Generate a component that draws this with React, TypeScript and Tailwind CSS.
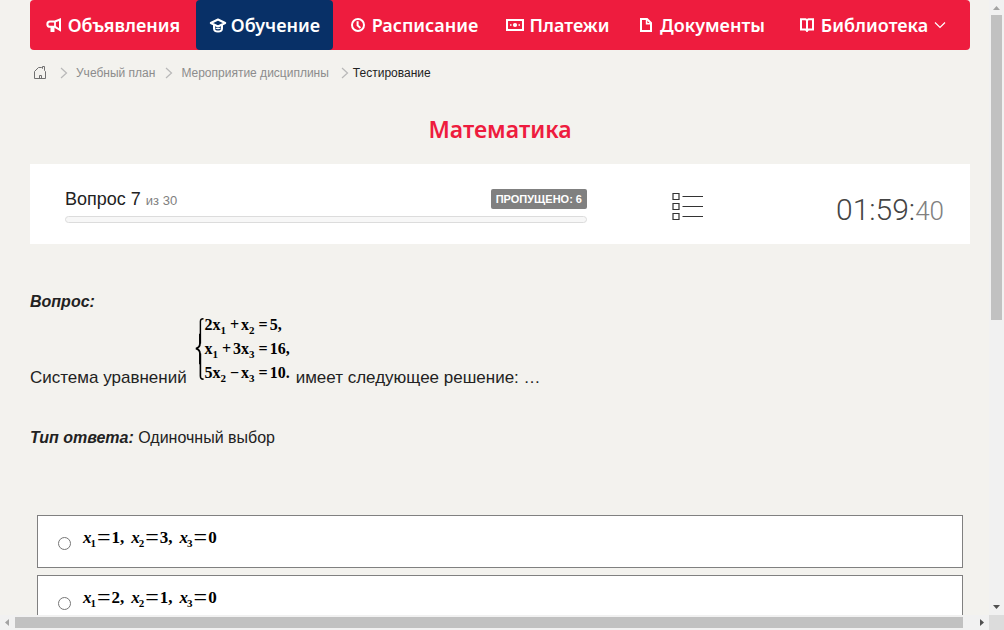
import React, { Fragment } from "react";
import type { ReactNode } from "react";

function Icon({ children, wide = false }: { children: ReactNode; wide?: boolean }) {
  return (
    <svg
      viewBox={wide ? "0 0 18 16" : "0 0 16 16"}
      className={wide ? "h-4 w-[18px] shrink-0" : "h-4 w-4 shrink-0"}
      fill="none"
      stroke="currentColor"
      strokeWidth="2"
      aria-hidden="true"
    >
      {children}
    </svg>
  );
}

const MegaphoneIcon = () => (
  <Icon>
    <path d="M14 2.500V13L9 9.800H4A2.200 2.200 0 0 1 4 4.500H9Z" strokeWidth="2" />
    <path d="M9 4.500v5" strokeWidth="1.8" />
    <path d="M4.500 9.600V15H8.500V9.600Z" fill="currentColor" stroke="none" />
  </Icon>
);

const CapIcon = () => (
  <Icon wide>
    <path d="M1.800 6 9 2.500l7.200 3.500L9 9.500Z" strokeWidth="2" strokeLinejoin="round" />
    <path d="M5 8v3.400Q5 14.500 9 14.500T13 11.400V8" strokeWidth="2" />
    <path d="M6.500 11Q9 12.300 11.500 11" strokeWidth="1.200" />
  </Icon>
);

const ClockIcon = () => (
  <Icon>
    <circle cx="8" cy="8" r="6" />
    <path d="M7.6 4.2V8.4L10.4 11" />
  </Icon>
);

const MoneyIcon = () => (
  <Icon wide>
    <path d="M1 3H17V13H1Z" />
    <path d="M1 2H5L1 5ZM13 2H17V5ZM1 14V11L5 14ZM17 14H13L17 11Z" fill="currentColor" stroke="none" />
    <circle cx="9" cy="8" r="2.1" fill="currentColor" stroke="none" />
    <path d="M4 8h1.5M12.5 8H14" strokeWidth="1.5" />
  </Icon>
);

const FileIcon = () => (
  <Icon>
    <path d="M3 2H9L13 6V14H3Z" />
    <path d="M8.6 2V6.8H13" strokeWidth="1.6" />
  </Icon>
);

const BookIcon = () => (
  <Icon>
    <path d="M2 2.2H6.4L8 3.2 9.6 2.2H14V12.4H9.6L8 13.6 6.4 12.4H2Z" strokeWidth="2" />
    <path d="M8 3V14.8" strokeWidth="2" />
  </Icon>
);

const navItems = [
  { label: "Объявления", icon: <MegaphoneIcon /> },
  { label: "Обучение", icon: <CapIcon />, active: true },
  { label: "Расписание", icon: <ClockIcon /> },
  { label: "Платежи", icon: <MoneyIcon /> },
  { label: "Документы", icon: <FileIcon /> },
  { label: "Библиотека", icon: <BookIcon />, menu: true },
];

function MainNav() {
  return (
    <nav className="grid h-[50px] grid-cols-[166fr_137fr_162fr_125fr_163fr_187fr] rounded-[4px] bg-[#ee1c3e] font-['Noto_Sans','Open_Sans',sans-serif] text-[18px] font-semibold text-white">
      {navItems.map((item) => (
        <a
          key={item.label}
          href="#"
          className={
            item.active
              ? "flex items-center justify-center gap-1 rounded-[4px] bg-[#083067]"
              : item.menu
                ? "flex items-center justify-center gap-1.5 pr-2"
                : "flex items-center justify-center gap-1.5"
          }
        >
          {item.icon}
          <span>{item.label}</span>
          {item.menu && (
            <svg viewBox="0 0 12 8" className="h-2 w-3 shrink-0" fill="none" stroke="currentColor" strokeWidth="1.2" aria-hidden="true">
              <path d="M1 1.5 6 6.5 11 1.5" />
            </svg>
          )}
        </a>
      ))}
    </nav>
  );
}

function Separator() {
  return (
    <svg viewBox="0 0 8 12" className="h-3 w-2 shrink-0" fill="none" stroke="#b8b8b8" strokeWidth="1.2" aria-hidden="true">
      <path d="M1 1 6.5 6 1 11" />
    </svg>
  );
}

function Breadcrumbs() {
  return (
    <nav className="flex h-[46px] items-center pl-[3px] text-[12px] text-[#8c8c8c]">
      <a href="#" aria-label="Главная" className="mr-[13px]">
        <svg viewBox="0 0 14 14" className="h-3.5 w-3.5" fill="none" stroke="#707070" strokeWidth="1">
          <path d="M1.5 5.500V12.5H12.5V5.500M6.500 12.500V9.500H8.500V12.500" />
          <path d="M1.500 5.500 5.500 1.500H8.500L9.500 2.500V.500H11.500V4.500L12.500 5.500" />
        </svg>
      </a>
      <Separator />
      <a href="#" className="ml-2 mr-2.5">Учебный план</a>
      <Separator />
      <a href="#" className="mx-2 pr-1">Мероприятие дисциплины</a>
      <Separator />
      <span className="ml-1 text-[#222]">Тестирование</span>
    </nav>
  );
}

function StatusCard() {
  return (
    <section className="flex h-20 bg-white">
      <div className="ml-[35px] mt-6 min-w-0 flex-[522]">
        <div className="flex items-start justify-between">
          <p className="text-[18px] leading-[22px] text-[#222]">
            Вопрос 7 <span className="text-[13px] leading-none text-[#808080]">из 30</span>
          </p>
          <span className="mt-px h-5 rounded-[2px] bg-[#808080] px-[5px] text-[11px] font-bold leading-5 text-white">
            ПРОПУЩЕНО: 6
          </span>
        </div>
        <div className="mt-1.5 h-[7px] rounded-[4px] border border-[#dcdcdc] bg-[#f7f7f7]" />
      </div>
      <div className="flex flex-[201] items-start justify-center pt-7">
        <button type="button" aria-label="Список вопросов">
          <svg viewBox="0 0 32 30" className="h-[30px] w-8" fill="none" stroke="#333" strokeWidth="1.2">
            <path d="M1 1.500H7V7.500H1ZM1 11.500H7V17.500H1ZM1 21.500H7V27.500H1Z" />
            <path d="M10.500 4.500H31M10.500 14.500H31M10.500 24.500H31" />
          </svg>
        </button>
      </div>
      <p className="mr-[26px] flex flex-[156] items-baseline justify-end pt-[26px] font-['Roboto',sans-serif] text-[30px] font-light leading-10 text-[#444]">
        01:59:<span className="text-[26px] text-[#808080]">40</span>
      </p>
    </section>
  );
}

function Var({ n }: { n: number }) {
  return (
    <>
      x<sub className="bottom-[-4px] text-[11px] leading-none">{n}</sub>
    </>
  );
}

function Op({ children }: { children: string }) {
  return <span className="ml-1 mr-0.5">{children}</span>;
}

function EquationSystem() {
  return (
    <span className="ml-1 mr-1.5 inline-flex h-[70px] items-stretch align-[-1px] font-['Liberation_Serif',serif] text-[16px] font-bold text-black">
      <svg viewBox="0 0 10 70" className="h-[70px] w-[9px] shrink-0" fill="none" stroke="currentColor" aria-hidden="true">
        <path d="M9.5 1.5Q6 1.2 6 4.5V29" strokeWidth="1.6" />
        <path d="M5.5 18V29Q5.5 33.5 1 34.5 5.5 35.500 5.500 40V52" strokeWidth="2" />
        <path d="M6 40V65Q6 68.800 9.500 68.500" strokeWidth="1.8" />
      </svg>
      <span className="grid grid-rows-[24px_24px_24px] whitespace-nowrap leading-[22px]">
        <span>2<Var n={1} /><Op>+</Op><Var n={2} /><Op>=</Op>5,</span>
        <span><Var n={1} /><Op>+</Op>3<Var n={3} /><Op>=</Op>16,</span>
        <span>5<Var n={2} /><Op>−</Op><Var n={3} /><Op>=</Op>10.</span>
      </span>
    </span>
  );
}

const answers = [
  [1, 3, 0],
  [2, 1, 0],
];

function Answer({ values, index }: { values: number[]; index: number }) {
  return (
    <label className="flex h-[53px] items-start border border-[#808080] bg-white pl-5 font-['Liberation_Serif',serif] text-[17px] font-bold leading-5 text-black">
      <input
        type="radio"
        name="answer"
        value={index}
        className="mt-[21px] h-[13px] w-[13px] shrink-0 appearance-none rounded-full border border-[#767676] bg-white checked:border-4"
      />
      <span className="ml-3 mt-[11px] flex items-baseline">
        {values.map((v, i) => (
          <Fragment key={i}>
            <span className={i > 0 ? "ml-[7px] italic" : "italic"}>x</span>
            <span className="relative top-1 -ml-px text-[11px] leading-none">{i + 1}</span>
            <span className="relative top-0.5 mx-px text-[24px] font-normal leading-4">=</span>
            <span>{v}{i < values.length - 1 && ","}</span>
          </Fragment>
        ))}
      </span>
    </label>
  );
}

function Arrow({ d }: { d: string }) {
  return (
    <svg viewBox="0 0 15 15" className="h-[15px] w-[15px] shrink-0" aria-hidden="true">
      <path d={d} fill="currentColor" />
    </svg>
  );
}

export default function App() {
  return (
    <div className="grid h-screen grid-cols-[minmax(0,1fr)_15px] grid-rows-[minmax(0,1fr)_15px] bg-[#f3f2ee] font-['Liberation_Sans',Arial,sans-serif] text-[#222]">
      <main className="overflow-hidden pl-[30px] pr-[19px]">
        <MainNav />
        <Breadcrumbs />
        <h1 className="mt-[15px] text-center font-['Noto_Sans','Open_Sans',sans-serif] text-[23px] font-semibold leading-9 text-[#ee1c3e]">
          Математика
        </h1>
        <div className="mt-[17px]">
          <StatusCard />
        </div>
        <section className="mt-12 text-[16px] leading-5">
          <h2 className="font-bold italic">Вопрос:</h2>
          <p className="mt-0.5 text-[17px]">
            Система уравнений <EquationSystem />имеет следующее решение: …
          </p>
          <p className="mt-10">
            <b className="italic">Тип ответа:</b> Одиночный выбор
          </p>
        </section>
        <div className="mt-[67px] flex flex-col gap-[7px] px-[7px]">
          {answers.map((values, i) => (
            <Answer key={i} values={values} index={i} />
          ))}
        </div>
      </main>
      <div className="flex flex-col items-center bg-[#f1f1f1]">
        <span className="text-[#a3a3a3]"><Arrow d="M4 10H11L7.500 6Z" /></span>
        <div className="w-[11px] flex-[305] bg-[#c1c1c1]" />
        <div className="flex-[280]" />
        <span className="text-[#505050]"><Arrow d="M4 5H11L7.500 9Z" /></span>
      </div>
      <div className="flex items-center bg-[#f1f1f1]">
        <span className="text-[#a3a3a3]"><Arrow d="M9 4V11L5 7.500Z" /></span>
        <div className="h-[11px] flex-[948] bg-[#c1c1c1]" />
        <div className="flex-[11]" />
        <span className="text-[#505050]"><Arrow d="M6 4V11L10 7.500Z" /></span>
      </div>
      <div className="bg-[#dcdcdc]" />
    </div>
  );
}
